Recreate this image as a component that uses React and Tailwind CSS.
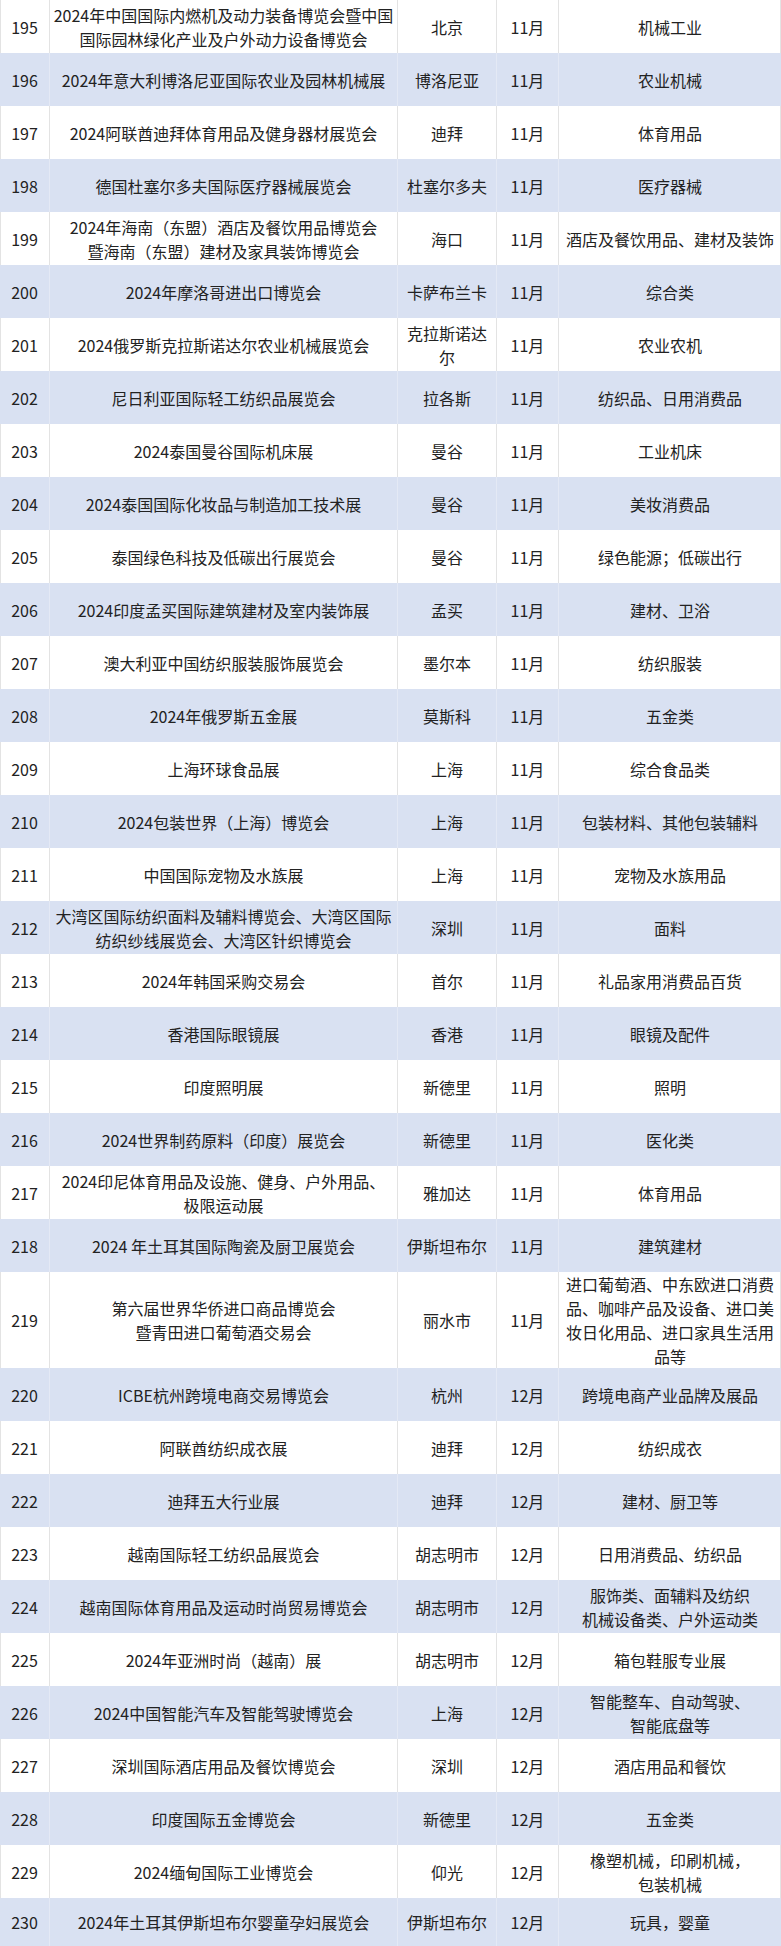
const rows = [
  ["195", "2024年中国国际内燃机及动力装备博览会暨中国\n国际园林绿化产业及户外动力设备博览会", "北京", "11月", "机械工业"],
  ["196", "2024年意大利博洛尼亚国际农业及园林机械展", "博洛尼亚", "11月", "农业机械"],
  ["197", "2024阿联酋迪拜体育用品及健身器材展览会", "迪拜", "11月", "体育用品"],
  ["198", "德国杜塞尔多夫国际医疗器械展览会", "杜塞尔多夫", "11月", "医疗器械"],
  ["199", "2024年海南（东盟）酒店及餐饮用品博览会\n暨海南（东盟）建材及家具装饰博览会", "海口", "11月", "酒店及餐饮用品、建材及装饰"],
  ["200", "2024年摩洛哥进出口博览会", "卡萨布兰卡", "11月", "综合类"],
  ["201", "2024俄罗斯克拉斯诺达尔农业机械展览会", "克拉斯诺达\n尔", "11月", "农业农机"],
  ["202", "尼日利亚国际轻工纺织品展览会", "拉各斯", "11月", "纺织品、日用消费品"],
  ["203", "2024泰国曼谷国际机床展", "曼谷", "11月", "工业机床"],
  ["204", "2024泰国国际化妆品与制造加工技术展", "曼谷", "11月", "美妆消费品"],
  ["205", "泰国绿色科技及低碳出行展览会", "曼谷", "11月", "绿色能源；低碳出行"],
  ["206", "2024印度孟买国际建筑建材及室内装饰展", "孟买", "11月", "建材、卫浴"],
  ["207", "澳大利亚中国纺织服装服饰展览会", "墨尔本", "11月", "纺织服装"],
  ["208", "2024年俄罗斯五金展", "莫斯科", "11月", "五金类"],
  ["209", "上海环球食品展", "上海", "11月", "综合食品类"],
  ["210", "2024包装世界（上海）博览会", "上海", "11月", "包装材料、其他包装辅料"],
  ["211", "中国国际宠物及水族展", "上海", "11月", "宠物及水族用品"],
  ["212", "大湾区国际纺织面料及辅料博览会、大湾区国际\n纺织纱线展览会、大湾区针织博览会", "深圳", "11月", "面料"],
  ["213", "2024年韩国采购交易会", "首尔", "11月", "礼品家用消费品百货"],
  ["214", "香港国际眼镜展", "香港", "11月", "眼镜及配件"],
  ["215", "印度照明展", "新德里", "11月", "照明"],
  ["216", "2024世界制药原料（印度）展览会", "新德里", "11月", "医化类"],
  ["217", "2024印尼体育用品及设施、健身、户外用品、\n极限运动展", "雅加达", "11月", "体育用品"],
  ["218", "2024 年土耳其国际陶瓷及厨卫展览会", "伊斯坦布尔", "11月", "建筑建材"],
  ["219", "第六届世界华侨进口商品博览会\n暨青田进口葡萄酒交易会", "丽水市", "11月", "进口葡萄酒、中东欧进口消费品、咖啡产品及设备、进口美妆日化用品、进口家具生活用品等"],
  ["220", "ICBE杭州跨境电商交易博览会", "杭州", "12月", "跨境电商产业品牌及展品"],
  ["221", "阿联酋纺织成衣展", "迪拜", "12月", "纺织成衣"],
  ["222", "迪拜五大行业展", "迪拜", "12月", "建材、厨卫等"],
  ["223", "越南国际轻工纺织品展览会", "胡志明市", "12月", "日用消费品、纺织品"],
  ["224", "越南国际体育用品及运动时尚贸易博览会", "胡志明市", "12月", "服饰类、面辅料及纺织\n机械设备类、户外运动类"],
  ["225", "2024年亚洲时尚（越南）展", "胡志明市", "12月", "箱包鞋服专业展"],
  ["226", "2024中国智能汽车及智能驾驶博览会", "上海", "12月", "智能整车、自动驾驶、\n智能底盘等"],
  ["227", "深圳国际酒店用品及餐饮博览会", "深圳", "12月", "酒店用品和餐饮"],
  ["228", "印度国际五金博览会", "新德里", "12月", "五金类"],
  ["229", "2024缅甸国际工业博览会", "仰光", "12月", "橡塑机械，印刷机械，\n包装机械"],
  ["230", "2024年土耳其伊斯坦布尔婴童孕妇展览会", "伊斯坦布尔", "12月", "玩具，婴童"],
];

function Cell({ text, blue, col }) {
  const border = col === 4 ? "" : blue ? "border-r border-[#e4e9f5]" : "border-r border-[#e3e3e3]";
  const wrap = col === 1 ? "whitespace-pre px-0" : "whitespace-pre-line px-1";
  return (
    <div className={`flex items-center justify-center text-center min-w-0 ${wrap} ${border}`}>
      {text}
    </div>
  );
}

export default function App() {
  return (
    <div
      className="w-[781px] text-[16px] leading-[24px] text-[#222222]"
      style={{ fontFamily: '"Noto Sans CJK SC", "Noto Sans", sans-serif' }}
    >
      {rows.map((r, i) => {
        const blue = i % 2 === 1;
        const h = r[0] === "219" ? "h-[96px]" : r[0] === "230" ? "h-[48px]" : "h-[53px]";
        return (
          <div
            key={r[0]}
            className={`grid grid-cols-[50px_348px_99px_62px_222px] ${h} ${
              blue ? "bg-[#d9e1f2]" : "bg-white shadow-[inset_1px_0_0_#e3e3e3,inset_-1px_0_0_#e3e3e3]"
            }`}
          >
            {r.map((t, j) => (
              <Cell key={j} text={t} blue={blue} col={j} />
            ))}
          </div>
        );
      })}
    </div>
  );
}
